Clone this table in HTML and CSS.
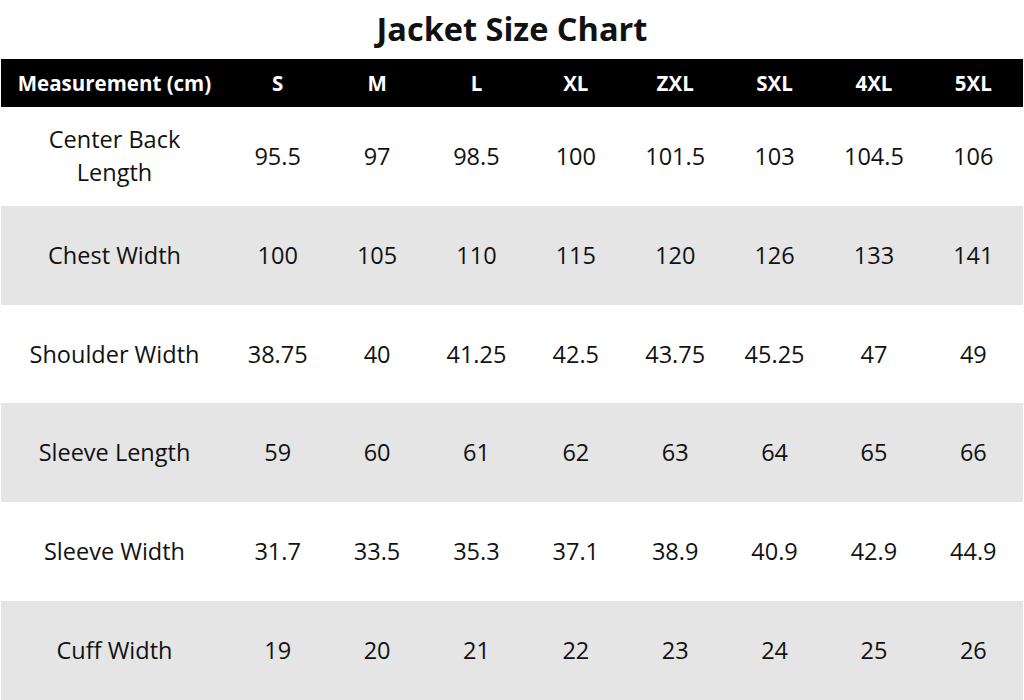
FILE: index.html
```html
<!DOCTYPE html>
<html lang="en">
<head>
<meta charset="utf-8">
<title>Jacket Size Chart</title>
<link rel="stylesheet" href="styles.css">
</head>
<body>
<div class="page">
  <h1 class="title">Jacket Size Chart</h1>
  <div class="chart">
    <div class="row head">
      <div class="cell label">Measurement (cm)</div>
      <div class="cell">S</div><div class="cell">M</div><div class="cell">L</div><div class="cell">XL</div>
      <div class="cell">ZXL</div><div class="cell">SXL</div><div class="cell">4XL</div><div class="cell">5XL</div>
    </div>
    <div class="row">
      <div class="cell label">Center Back<br>Length</div>
      <div class="cell">95.5</div><div class="cell">97</div><div class="cell">98.5</div><div class="cell">100</div>
      <div class="cell">101.5</div><div class="cell">103</div><div class="cell">104.5</div><div class="cell">106</div>
    </div>
    <div class="row alt">
      <div class="cell label">Chest Width</div>
      <div class="cell">100</div><div class="cell">105</div><div class="cell">110</div><div class="cell">115</div>
      <div class="cell">120</div><div class="cell">126</div><div class="cell">133</div><div class="cell">141</div>
    </div>
    <div class="row">
      <div class="cell label">Shoulder Width</div>
      <div class="cell">38.75</div><div class="cell">40</div><div class="cell">41.25</div><div class="cell">42.5</div>
      <div class="cell">43.75</div><div class="cell">45.25</div><div class="cell">47</div><div class="cell">49</div>
    </div>
    <div class="row alt">
      <div class="cell label">Sleeve Length</div>
      <div class="cell">59</div><div class="cell">60</div><div class="cell">61</div><div class="cell">62</div>
      <div class="cell">63</div><div class="cell">64</div><div class="cell">65</div><div class="cell">66</div>
    </div>
    <div class="row">
      <div class="cell label">Sleeve Width</div>
      <div class="cell">31.7</div><div class="cell">33.5</div><div class="cell">35.3</div><div class="cell">37.1</div>
      <div class="cell">38.9</div><div class="cell">40.9</div><div class="cell">42.9</div><div class="cell">44.9</div>
    </div>
    <div class="row alt">
      <div class="cell label">Cuff Width</div>
      <div class="cell">19</div><div class="cell">20</div><div class="cell">21</div><div class="cell">22</div>
      <div class="cell">23</div><div class="cell">24</div><div class="cell">25</div><div class="cell">26</div>
    </div>
  </div>
</div>
</body>
</html>
```

FILE: styles.css
```css
html, body {
  margin: 0;
  padding: 0;
  background: #ffffff;
}
body {
  font-family: "Open Sans", "Noto Sans", sans-serif;
  color: #111111;
}
.page {
  width: 1024px;
  height: 700px;
  display: flex;
  flex-direction: column;
  overflow: hidden;
}
.title {
  margin: 0;
  height: 59px;
  display: flex;
  align-items: center;
  justify-content: center;
  font-size: 32.5px;
  font-weight: 700;
  color: #111;
  line-height: 1;
}
.chart {
  flex: 1;
  display: flex;
  flex-direction: column;
  margin: 0 1px;
}
.row {
  flex: 1;
  display: grid;
  grid-template-columns: 227px repeat(8, 1fr);
  align-items: center;
  font-size: 23.5px;
  line-height: 33px;
}
.row.alt {
  background: #e5e5e5;
}
.row.head {
  flex: 0 0 48px;
  background: #000;
  color: #fff;
  font-weight: 700;
  font-size: 20.5px;
  line-height: 22px;
}
.cell {
  text-align: center;
}
```
